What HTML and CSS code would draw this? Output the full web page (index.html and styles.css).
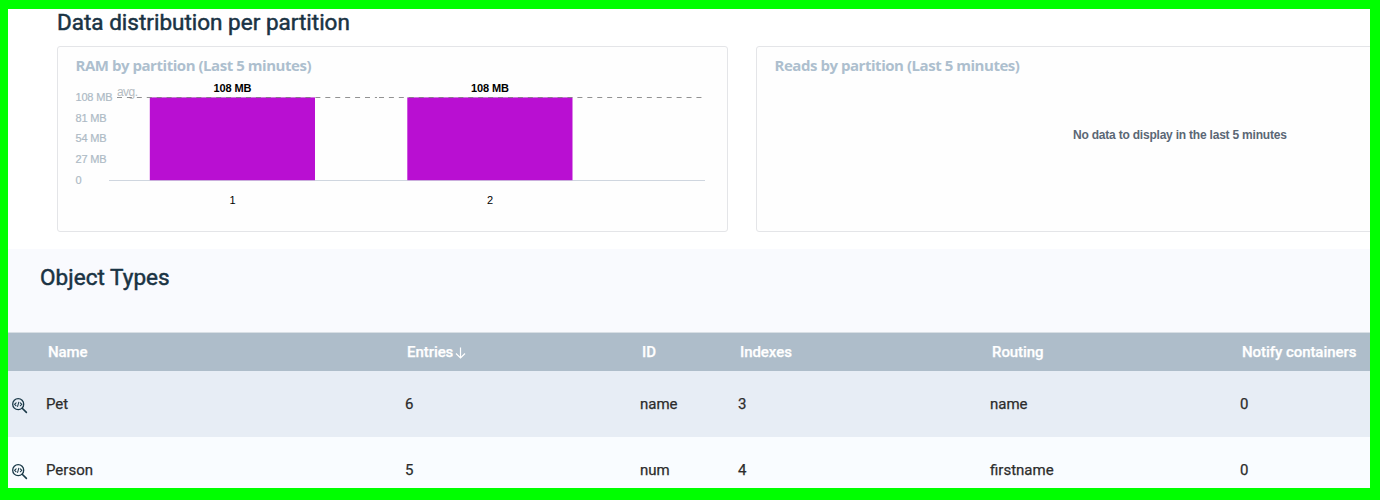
FILE: index.html
```html
<!DOCTYPE html>
<html lang="en">
<head>
<meta charset="utf-8">
<title>Data distribution</title>
<link rel="stylesheet" href="styles.css">
</head>
<body>
<svg class="defs" width="0" height="0">
  <symbol id="inspect" viewBox="0 0 16 16">
    <g fill="none" stroke="#1a3948" stroke-linecap="round">
      <circle cx="6.2" cy="6.2" r="5.5" stroke-width="1.3"/>
      <path d="M10.2 10.2 14.4 14.4" stroke-width="1.6"/>
      <path d="M4.1 4.8 2.6 6.3 4.1 7.8M8.3 4.8 9.8 6.3 8.3 7.8M6.8 4.2 5.6 8.4" stroke-width="1.05"/>
    </g>
  </symbol>
</svg>
<div class="frame">
  <section class="distribution">
    <h2 class="title">Data distribution per partition</h2>
    <div class="cards">
      <article class="card">
        <h3 class="card-title">RAM by partition (Last 5 minutes)</h3>
        <svg class="chart" width="650" height="140" viewBox="68 76 650 140">
          <g class="scale">
            <text x="75.5" y="101" textLength="37">108 MB</text>
            <text x="75.5" y="122" textLength="31">81 MB</text>
            <text x="75.5" y="142" textLength="31">54 MB</text>
            <text x="75.5" y="163" textLength="31">27 MB</text>
            <text x="75.5" y="184">0</text>
          </g>
          <text class="avg" x="117" y="96" textLength="21">avg.</text>
          <path class="axis" d="M109 180.5H705"/>
          <rect class="bar" x="149.8" y="97.4" width="165.2" height="82.8"/>
          <rect class="bar" x="407.3" y="97.4" width="165.2" height="82.8"/>
          <path class="average" d="M117 97.5H377M379 97.5H702"/>
          <g class="value"><text x="232.5" y="92" textLength="38">108 MB</text><text x="490" y="92" textLength="38">108 MB</text></g>
          <g class="label"><text x="232.5" y="204">1</text><text x="490" y="204">2</text></g>
        </svg>
      </article>
      <article class="card">
        <h3 class="card-title">Reads by partition (Last 5 minutes)</h3>
        <p class="empty">No data to display in the last 5 minutes</p>
      </article>
    </div>
  </section>
  <section class="types">
    <h2 class="types-title">Object Types</h2>
    <div class="row head">
      <span></span><span>Name</span>
      <span>Entries<svg class="sort" width="11" height="12" viewBox="0 0 11 12"><path d="M5.5 .5V11M1 6.5 5.5 11 10 6.5"/></svg></span>
      <span>ID</span><span>Indexes</span><span>Routing</span><span>Notify containers</span>
    </div>
    <div class="row odd">
      <svg class="inspect" width="16" height="16"><use href="#inspect"/></svg>
      <span>Pet</span><span>6</span><span>name</span><span>3</span><span>name</span><span>0</span>
    </div>
    <div class="row even">
      <svg class="inspect" width="16" height="16"><use href="#inspect"/></svg>
      <span>Person</span><span>5</span><span>num</span><span>4</span><span>firstname</span><span>0</span>
    </div>
  </section>
</div>
</body>
</html>
```
FILE: styles.css
```css
* { box-sizing: border-box; }
body { margin: 0; font-family: Roboto, sans-serif; color: #2c2c2c; }
h2, h3, p { margin: 0; }
svg { display: block; }
.defs { display: none; }
.frame {
  width: 1380px;
  height: 500px;
  overflow: hidden;
  border: solid #00ff00;
  border-width: 9px 10px 12px 8px;
  background: #fff;
}
.distribution { height: 240px; overflow: hidden; }
.title, .types-title {
  font-size: 22.5px;
  font-weight: 400;
  line-height: 27px;
  color: #1a3344;
  -webkit-text-stroke: .5px #1a3344;
}
.title { height: 37px; padding-left: 49px; }
.cards {
  display: grid;
  grid-template-columns: 671px 671px;
  gap: 28px;
  padding-left: 49px;
}
.card {
  height: 186px;
  border: 1px solid #e4e5e8;
  border-radius: 3px;
  background: #fefefe;
}
.card-title {
  height: 29px;
  padding: 8px 0 0 17.5px;
  font: 700 15px/20px "Open Sans", sans-serif;
  letter-spacing: -.46px;
  color: #adbfce;
}
.chart { margin-left: 10px; font-family: "Liberation Sans", sans-serif; }
.scale { font-size: 11px; fill: #adbac5; stroke: #adbac5; stroke-width: .2px; }
.avg { font-size: 12px; fill: #b5bcc2; }
.axis { stroke: #cfd6df; }
.bar { fill: #b90fd2; }
.average { stroke: #777; stroke-opacity: .8; stroke-dasharray: 5 4.92; fill: none; }
.value { font-size: 11px; font-weight: 700; fill: #000; text-anchor: middle; }
.label { font-size: 11px; fill: #000; text-anchor: middle; }
.empty {
  padding-top: 51px;
  padding-left: 176px;
  margin-left: 140px;
  font: 700 12px/16px "Liberation Sans", sans-serif;
  letter-spacing: -.21px;
  color: #5b6775;
}
.types { height: 239px; background: #f9fafe; }
.types-title { height: 83px; padding: 15px 0 0 32px; letter-spacing: .05px; }
.row {
  display: grid;
  grid-template-columns: 38px 359px 235px 98px 252px 250px 1fr;
  align-items: center;
  height: 66px;
  font-size: 15px;
  line-height: 20px;
  white-space: nowrap;
  -webkit-text-stroke: .25px currentColor;
}
.head {
  height: 39px;
  border-top: 1px solid #d8dfe5;
  background: #aebdca;
  color: #fff;
  font-weight: 500;
  letter-spacing: -.06px;
}
.head span { display: flex; align-items: center; padding-left: 2px; }
.sort { margin: 2px 0 0 2px; fill: none; stroke: #fff; stroke-width: 1.2; }
.odd { background: #e7edf5; }
.even { background: #f9fcff; }
.inspect { margin: 3px 0 0 4px; }
```
